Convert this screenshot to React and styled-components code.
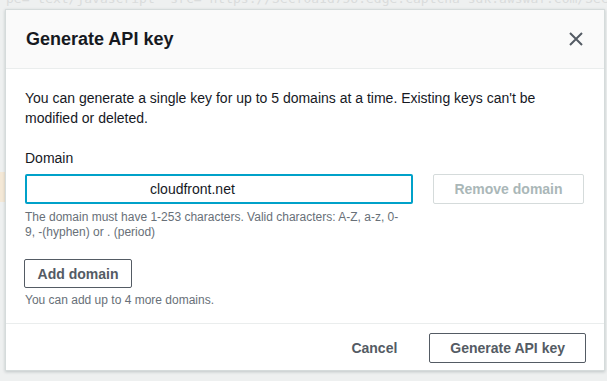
import styled, { createGlobalStyle } from "styled-components";

const GlobalStyle = createGlobalStyle`
  html, body {
    margin: 0;
    padding: 0;
    background: #f0f1f1;
  }
  body {
    font-family: "Liberation Sans", Arial, sans-serif;
    color: #16191f;
  }
`;

const Page = styled.div`
  position: relative;
  width: 607px;
  height: 381px;
  overflow: hidden;
  background: #eef0f0;
`;

const CodeLine = styled.div`
  font-family: "DejaVu Sans Mono", monospace;
  font-size: 13px;
  line-height: 16px;
  color: #dadcdc;
  white-space: nowrap;
  margin-top: -9px;
  padding-left: 6px;
`;

const SideMark = styled.div`
  margin-top: 165px;
  width: 6px;
  height: 30px;
  background: #f4e8d6;
`;

const Dialog = styled.div`
  position: absolute;
  left: 5px;
  top: 9px;
  width: 598px;
  background: #fff;
  border: 1px solid #d5dbdb;
  box-shadow: 0 1px 3px rgba(0, 28, 36, 0.2);
`;

const Header = styled.div`
  height: 58px;
  display: flex;
  align-items: center;
  justify-content: space-between;
  padding: 0 21px 0 20px;
  background: #fafafa;
  border-bottom: 1px solid #eaeded;
`;

const Title = styled.h2`
  margin: 0;
  font-size: 18px;
  line-height: 22px;
  font-weight: 700;
  color: #16191f;
`;

const CloseButton = styled.button`
  border: 0;
  background: none;
  padding: 0;
  width: 14px;
  height: 14px;
  display: flex;
  cursor: pointer;
`;

const Body = styled.div`
  padding: 19px 19px 15px 19px;
`;

const Intro = styled.p`
  margin: 0;
  font-size: 14px;
  line-height: 20px;
  max-width: 540px;
  color: #16191f;
`;

const Label = styled.label`
  display: block;
  margin-top: 20px;
  font-size: 14px;
  line-height: 20px;
  color: #16191f;
`;

const FieldRow = styled.div`
  display: flex;
  align-items: flex-start;
  gap: 20px;
  margin-top: 6px;
`;

const DomainInput = styled.input`
  box-sizing: border-box;
  width: 388px;
  height: 30px;
  padding: 0 10px;
  text-indent: 113px;
  border: 2px solid #00a1c9;
  border-radius: 2px;
  font-family: inherit;
  font-size: 14px;
  color: #16191f;
  outline: none;
`;

const Button = styled.button`
  box-sizing: border-box;
  height: ${p => (p.$tall ? "30px" : "29px")};
  width: ${p => p.$width || "auto"};
  padding: 0 ${p => (p.$width ? "0" : "20px")};
  background: #fff;
  border: 1px solid ${p => (p.disabled ? "#d5dbdb" : "#545b64")};
  border-radius: 2px;
  font-family: inherit;
  font-size: 14px;
  font-weight: 700;
  color: ${p => (p.disabled ? "#aab7b8" : "#545b64")};
  cursor: ${p => (p.disabled ? "default" : "pointer")};
  white-space: nowrap;
`;

const LinkButton = styled(Button)`
  border-color: transparent;
  background: none;
`;

const Hint = styled.div`
  max-width: 378px;
  margin-top: ${p => p.$top || "6px"};
  font-size: 12px;
  line-height: 15px;
  color: #687078;
`;

const AddRow = styled.div`
  margin-top: 19px;
  margin-left: -1px;
`;

const Footer = styled.div`
  display: flex;
  justify-content: flex-end;
  align-items: center;
  gap: 11px;
  padding: 9px 18px 7px;
  border-top: 1px solid #eaeded;
`;

function CloseIcon() {
  return (
    <svg width="14" height="14" viewBox="0 0 14 14" fill="none">
      <path d="M1 1l12 12M13 1L1 13" stroke="#545b64" strokeWidth="2" />
    </svg>
  );
}

export default function App() {
  return (
    <Page>
      <GlobalStyle />
      <CodeLine>
        pe="text/javascript" src="https://3ecf0a1d756.edge.captcha-sdk.awswaf.com/3ecf0a1d756/jsapi.js"
      </CodeLine>
      <SideMark />
      <Dialog role="dialog">
        <Header>
          <Title>Generate API key</Title>
          <CloseButton aria-label="Close">
            <CloseIcon />
          </CloseButton>
        </Header>
        <Body>
          <Intro>
            You can generate a single key for up to 5 domains at a time. Existing keys can't be
            modified or deleted.
          </Intro>
          <Label htmlFor="domain">Domain</Label>
          <FieldRow>
            <DomainInput id="domain" readOnly value="cloudfront.net" />
            <Button $tall $width="151px" disabled>Remove domain</Button>
          </FieldRow>
          <Hint>
            The domain must have 1-253 characters. Valid characters: A-Z, a-z, 0-9, -(hyphen) or . (period)
          </Hint>
          <AddRow>
            <Button $width="108px">Add domain</Button>
          </AddRow>
          <Hint $top="5px">You can add up to 4 more domains.</Hint>
        </Body>
        <Footer>
          <LinkButton>Cancel</LinkButton>
          <Button $tall>Generate API key</Button>
        </Footer>
      </Dialog>
    </Page>
  );
}
